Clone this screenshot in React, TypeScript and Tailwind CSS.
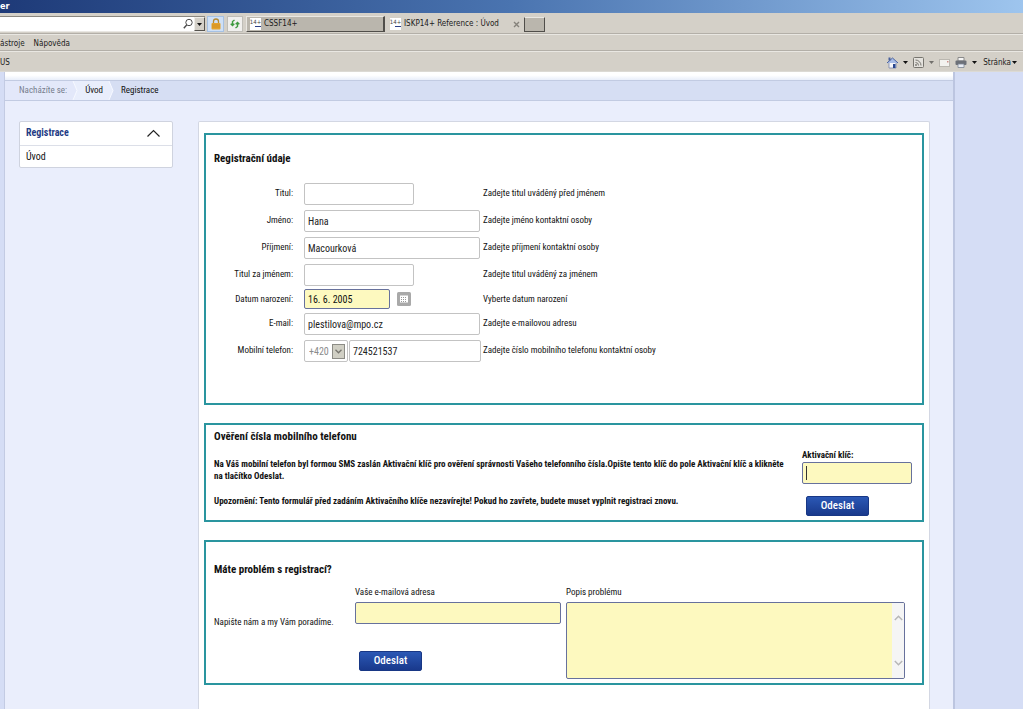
import { useId, type ReactNode } from "react";

const INPUT = "h-[22px] rounded-xs border border-[#c3c3c3] bg-white px-[3px] pt-0.5 text-[10px] text-[#222] outline-none";
const REQUIRED =
  "h-[22px] rounded-xs border border-[#67719c] bg-[#fdf9bf] px-1 text-[10px] text-[#222] outline-none";

export default function App() {
  return (
    <div className="flex h-screen flex-col overflow-hidden bg-[#d5ddf5] font-['Roboto_Condensed',Roboto,sans-serif] text-[10px] text-[#111]">
      <BrowserChrome />
      <div className="flex min-h-0 flex-1 pr-[68px] pl-1">
        <div className="flex min-w-0 flex-1 flex-col border-r-2 border-l border-r-[#bcc5e0] border-l-[#c3cbe3] bg-[#eaeefc]">
          <div className="h-2 shrink-0 bg-linear-to-b from-white from-40% to-[#e9eefa]" />
          <Breadcrumbs />
          <div className="flex min-h-0 flex-1 items-start pt-5 pr-[23px] pl-[14px]">
            <SideMenu />
            <main className="ml-[25px] flex h-full min-w-0 flex-1 flex-col gap-[18px] rounded-t-xs border border-b-0 border-[#d3d7e3] bg-white px-[5px] pt-[11px]">
              <RegistrationForm />
              <PhoneVerification />
              <ProblemForm />
            </main>
          </div>
        </div>
      </div>
    </div>
  );
}

function BrowserChrome() {
  return (
    <header className="shrink-0 border-b border-[#dcdad4] bg-[#d4d0c8] font-['DejaVu_Sans_Condensed',sans-serif] text-[8px] text-[#1a1a1a]">
      <div className="h-[13px] bg-linear-to-r from-[#1e3a78] via-[#4a74b0] to-[#9ec5ee] text-[9px] leading-[13px] font-bold text-white">
        er
      </div>
      <div className="flex h-[21px] items-center border-b border-[#b3afa8] pt-0.5">
        <div className="flex h-4 w-[205px] items-center justify-end border-y border-t-[#8a8780] border-b-[#e9e7e3] bg-white">
          <input aria-label="Adresa" className="min-w-0 flex-1 bg-white outline-none" />
          <svg width="12" height="12" viewBox="0 0 12 12" fill="none" stroke="#4b4b4b" aria-hidden="true">
            <circle cx="7" cy="4.5" r="3.2" />
            <path d="M4.7 7 1.8 10.3" strokeWidth="1.4" />
          </svg>
          <button
            type="button"
            aria-label="Historie"
            className="flex h-[14px] w-[11px] items-center justify-center border border-t-[#efede8] border-r-[#55534e] border-b-[#55534e] border-l-[#efede8] bg-[#d4d0c8]"
          >
            <Caret />
          </button>
        </div>
        <button
          type="button"
          aria-label="Zabezpečení"
          className="ml-0.5 flex h-4 w-[17px] items-center justify-center border border-[#a6c1e3] bg-[#cfe0f6]"
        >
          <svg width="10" height="12" viewBox="0 0 10 12" aria-hidden="true">
            <path d="M2.5 6V3.5a2.5 2.5 0 0 1 5 0V6" fill="none" stroke="#b58a35" strokeWidth="1.3" />
            <rect x="0.5" y="5" width="9" height="6.5" rx="1" fill="#e5a32c" />
            <path d="M1 7h8M1 9h8" stroke="#c98720" strokeWidth="0.7" />
          </svg>
        </button>
        <button
          type="button"
          aria-label="Aktualizovat"
          className="ml-[3px] flex h-4 w-4 items-center justify-center border border-[#bfbdb7] bg-[#f1f0ee]"
        >
          <svg width="12" height="12" viewBox="0 0 12 12" fill="none" stroke="#3f9a3f" strokeWidth="1.4" aria-hidden="true">
            <path d="M5.5 2 3.5 3.5v4M1.7 5.7l1.8 1.8 1.8-1.8" />
            <path d="M6.5 10 8.5 8.5v-4M6.7 6.3l1.8-1.8 1.8 1.8" />
          </svg>
        </button>
        <div className="ml-[3px] flex h-4 w-[139px] items-center border border-t-[#e9e7e2] border-r-2 border-r-[#504e4a] border-b-[#504e4a] border-l-[#e9e7e2] bg-[#bab6ad] pl-[3px]">
          <Favicon />
          <span className="ml-[3px]">CSSF14+</span>
        </div>
        <div className="flex h-4 w-[139px] items-center pl-[5px]">
          <Favicon />
          <span className="ml-[3px] flex-1 whitespace-nowrap">ISKP14+ Reference : Úvod</span>
          <button type="button" aria-label="Zavřít kartu" className="mr-1">
            <svg className="block" width="7" height="7" viewBox="0 0 7 7" stroke="#85827b" strokeWidth="1.4" aria-hidden="true">
              <path d="M1 1l5 5M6 1 1 6" />
            </svg>
          </button>
        </div>
        <button
          type="button"
          aria-label="Nová karta"
          className="h-[15px] w-[21px] border border-t-[#e9e7e2] border-r-[#504e4a] border-b-[#504e4a] border-l-[#504e4a] bg-[#bab6ad]"
        />
      </div>
      <nav className="flex h-[17px] items-center gap-[9px] border-t border-b border-t-[#e9e7e2] border-b-[#b3afa8] pt-0.5">
        <a href="#nastroje">ástroje</a>
        <a href="#napoveda">Nápověda</a>
      </nav>
      <div className="flex h-5 items-center border-t border-t-[#e9e7e2] pt-0.5 pr-[6px]">
        <span className="flex-1">US</span>
        <div className="flex items-center">
          <svg width="13" height="13" viewBox="0 0 13 13" aria-hidden="true">
            <path d="M3 6h7v6H3z" fill="#f5f6fb" stroke="#7a86ab" strokeWidth="0.8" />
            <path d="M1 7 6.5 2 12 7" fill="#a8bde8" stroke="#48609c" />
            <path d="M2.5 1.5h2v3h-2z" fill="#48609c" />
            <path d="M7 8h2.5v4H7z" fill="#27468f" />
          </svg>
          <span className="ml-1">
            <Caret />
          </span>
          <svg className="ml-[5px]" width="11" height="11" viewBox="0 0 11 11" fill="none" stroke="#77756f" aria-hidden="true">
            <rect x="0.5" y="0.5" width="10" height="10" rx="1" fill="#e4e2dd" />
            <path d="M2.5 5.5a3 3 0 0 1 3 3M2.5 3a5.5 5.5 0 0 1 5.5 5.5" />
            <circle cx="3" cy="8" r="0.6" />
          </svg>
          <span className="ml-[5px] opacity-50">
            <Caret />
          </span>
          <svg className="ml-[5px]" width="11" height="8" viewBox="0 0 11 8" aria-hidden="true">
            <rect x="0.5" y="0.5" width="10" height="7" fill="#f3f2ef" stroke="#bab7b0" />
            <path d="M8 2h1.5v1.5H8z" fill="#cc8f8a" />
          </svg>
          <svg className="ml-[5px]" width="12" height="11" viewBox="0 0 12 11" aria-hidden="true">
            <path d="M3 .5h6V4H3z" fill="#f5f5f5" stroke="#8a8a8a" />
            <rect x="0.5" y="3.5" width="11" height="4.5" rx="1" fill="#6c7078" />
            <path d="M3 7h6v3.5H3z" fill="#e9edf5" stroke="#7c8694" strokeWidth="0.8" />
          </svg>
          <span className="ml-[5px]">
            <Caret />
          </span>
          <button type="button" className="ml-[6px] flex items-center gap-px">
            Stránka
            <Caret />
          </button>
        </div>
      </div>
    </header>
  );
}

function Caret() {
  return (
    <svg className="block" width="5" height="3" viewBox="0 0 5 3" aria-hidden="true">
      <path d="M0 0h5L2.5 3z" fill="#111" />
    </svg>
  );
}

function Favicon() {
  return (
    <span className="flex h-3 w-[11px] shrink-0 flex-col items-center bg-white text-[6px] leading-[8px] text-[#444]">
      14+
      <span className="ml-1 h-px w-1.5 bg-[#2c3f86]" />
    </span>
  );
}

function Breadcrumbs() {
  return (
    <nav className="flex h-[21px] shrink-0 items-center border-y border-[#c2cbe2] bg-[#d6def3] text-[9px]">
      <div className="flex h-full items-center bg-[#e3e8fa] pl-[14px]">
        <span className="pt-px text-[#777d8e]">Nacházíte se:</span>
        <Chevron fill="#e3e8fa" back="#e9eefc" />
        <a href="#uvod" className="flex h-full items-center bg-[#e9eefc] pt-px pl-[5px]">
          Úvod
        </a>
        <Chevron fill="#e9eefc" back="#d6def3" />
      </div>
      <span className="pt-px pl-[5px]">Registrace</span>
    </nav>
  );
}

function Chevron({ fill, back }: { fill: string; back: string }) {
  return (
    <svg width="13" height="19" viewBox="0 0 13 19" aria-hidden="true">
      <path d="M0 0h13v19H0z" fill={back} />
      <path d="M0 0h6l4 9.5L6 19H0z" fill={fill} />
      <path d="M6 0l4 9.5L6 19" fill="none" stroke="#f6f8ff" />
    </svg>
  );
}

function SideMenu() {
  return (
    <aside className="w-[154px] shrink-0 rounded-xs border border-[#cfd3df] bg-white">
      <button
        type="button"
        className="flex h-6 w-full items-center justify-between border-b border-[#dcdfe8] pr-3 pb-0.5 pl-1.5 font-bold text-[#1f3c85]"
      >
        Registrace
        <svg width="13" height="8" viewBox="0 0 13 8" fill="none" stroke="#222" strokeWidth="1.2" aria-hidden="true">
          <path d="M0.5 7.5l6-6 6 6" />
        </svg>
      </button>
      <a href="#uvod" className="flex h-[21px] items-center pl-1.5">
        Úvod
      </a>
    </aside>
  );
}

function Panel({ children, className }: { children: ReactNode; className: string }) {
  return <section className={"shrink-0 border-2 border-[#2a959f] px-2 " + className}>{children}</section>;
}

function Field({
  label,
  hint,
  value,
  short = false,
}: {
  label: string;
  hint: string;
  value?: string;
  short?: boolean;
}) {
  const id = useId();
  return (
    <Row id={id} label={label} hint={hint}>
      <input id={id} defaultValue={value} className={INPUT + (short ? " w-[110px]" : " w-44")} />
    </Row>
  );
}

function Row({
  id,
  label,
  hint,
  height = "h-[27px]",
  children,
}: {
  id: string;
  label: string;
  hint: string;
  height?: string;
  children: ReactNode;
}) {
  return (
    <div className={"flex items-center text-[9px] " + height}>
      <label htmlFor={id} className="w-[79px] shrink-0 pt-px text-right whitespace-nowrap">
        {label}
      </label>
      <div className="ml-[11px] flex w-[179px] shrink-0 items-center">{children}</div>
      <span className="pt-px whitespace-nowrap">{hint}</span>
    </div>
  );
}

function RegistrationForm() {
  return (
    <Panel className="pt-4 pb-[39px]">
      <h2 className="text-[11px] leading-4 font-bold">Registrační údaje</h2>
      <form className="mt-[13px]">
        <Field label="Titul:" hint="Zadejte titul uváděný před jménem" short />
        <Field label="Jméno:" hint="Zadejte jméno kontaktní osoby" value="Hana" />
        <Field label="Příjmení:" hint="Zadejte příjmení kontaktní osoby" value="Macourková" />
        <Field label="Titul za jménem:" hint="Zadejte titul uváděný za jménem" short />
        <Row id="birth" label="Datum narození:" hint="Vyberte datum narození" height="h-[22px]">
          <input
            id="birth"
            defaultValue="16. 6. 2005"
            className="h-5 w-[86px] rounded-xs border border-[#67719c] bg-[#fdf9bf] px-[3px] text-[10px] outline-none"
          />
          <button type="button" aria-label="Kalendář" className="ml-[7px]">
            <svg className="block" width="14" height="14" viewBox="0 0 14 14" aria-hidden="true">
              <rect width="14" height="14" rx="1.5" fill="#a9a9a9" />
              <rect x="3" y="3.5" width="8" height="7" fill="#fff" />
              <path d="M4 5.5h6M4 7.5h6M4 9.5h6" stroke="#999" strokeDasharray="1 1" />
            </svg>
          </button>
        </Row>
        <Field label="E-mail:" hint="Zadejte e-mailovou adresu" value="plestilova@mpo.cz" />
        <Row id="phone" label="Mobilní telefon:" hint="Zadejte číslo mobilního telefonu kontaktní osoby">
          <div className="relative">
            <select
              aria-label="Předvolba"
              className="block h-[22px] w-11 appearance-none rounded-xs border border-[#c3c3c3] bg-white pt-0.5 pl-1 text-[10px] text-[#8b8b8b]"
            >
              <option>+420</option>
            </select>
            <span className="pointer-events-none absolute top-1 right-[3px] flex h-[15px] w-[13px] items-center justify-center border border-[#8c8c86] bg-[#d0cfc4]">
              <svg width="7" height="5" viewBox="0 0 7 5" fill="none" stroke="#77766f" strokeWidth="1.3" aria-hidden="true">
                <path d="M0.5 0.8l3 3 3-3" />
              </svg>
            </span>
          </div>
          <input id="phone" defaultValue="724521537" className={INPUT + " ml-px w-[132px]"} />
        </Row>
      </form>
    </Panel>
  );
}

function SubmitButton() {
  return (
    <button
      type="submit"
      className="block h-5 w-[63px] rounded-xs border border-[#183785] bg-linear-to-b from-[#2b58b5] to-[#19398c] text-[11px] leading-[18px] font-medium text-white"
    >
      Odeslat
    </button>
  );
}

function PhoneVerification() {
  return (
    <Panel className="py-1">
      <h2 className="text-[11px] leading-4 font-bold">Ověření čísla mobilního telefonu</h2>
      <form className="flex items-start text-[9px]">
        <div className="flex-1 pt-[13px] leading-3 font-bold">
          <p>
            Na Váš mobilní telefon byl formou SMS zaslán Aktivační klíč pro ověření správnosti Vašeho telefonního
            čísla.Opište tento klíč do pole Aktivační klíč a klikněte na tlačítko Odeslat.
          </p>
          <p className="mt-[13px]">
            Upozornění: Tento formulář před zadáním Aktivačního klíče nezavírejte! Pokud ho zavřete, budete muset
            vyplnit registraci znovu.
          </p>
        </div>
        <div className="mr-0.5 ml-2 w-[110px] shrink-0 pt-[3px]">
          <label htmlFor="key" className="block leading-[14px] font-bold">
            Aktivační klíč:
          </label>
          <div className="relative">
            <input id="key" className={REQUIRED + " block w-full"} />
            <span className="pointer-events-none absolute top-1 left-1 h-[14px] w-px bg-[#333]" />
          </div>
          <div className="mt-3 ml-1">
            <SubmitButton />
          </div>
        </div>
      </form>
    </Panel>
  );
}

function ProblemForm() {
  return (
    <Panel className="pt-5 pb-1">
      <h2 className="text-[11px] leading-4 font-bold">Máte problém s registrací?</h2>
      <form className="mt-1 flex items-start text-[9px]">
        <p className="w-[141px] shrink-0 pt-8 leading-4 whitespace-nowrap">Napište nám a my Vám poradíme.</p>
        <div className="w-[206px] shrink-0">
          <label htmlFor="mail" className="block h-5 leading-5">
            Vaše e-mailová adresa
          </label>
          <input id="mail" className={REQUIRED + " block w-full"} />
          <div className="mt-[27px] ml-1">
            <SubmitButton />
          </div>
        </div>
        <div className="mr-[9px] ml-[5px] min-w-0 flex-1">
          <label htmlFor="problem" className="block h-5 leading-5">
            Popis problému
          </label>
          <div className="flex h-[77px] overflow-hidden rounded-xs border border-[#67719c] bg-[#fdf9bf]">
            <textarea id="problem" className="min-w-0 flex-1 resize-none p-1 text-[10px] outline-none" />
            <div className="flex w-3 flex-col items-center justify-between bg-[#f5f5f5] py-3">
              <svg width="9" height="6" viewBox="0 0 9 6" fill="none" stroke="#b7b7b7" strokeWidth="1.5" aria-hidden="true">
                <path d="M0.8 5l3.7-3.7L8.2 5" />
              </svg>
              <svg width="9" height="6" viewBox="0 0 9 6" fill="none" stroke="#b7b7b7" strokeWidth="1.5" aria-hidden="true">
                <path d="M0.8 1l3.7 3.7L8.2 1" />
              </svg>
            </div>
          </div>
        </div>
      </form>
    </Panel>
  );
}
